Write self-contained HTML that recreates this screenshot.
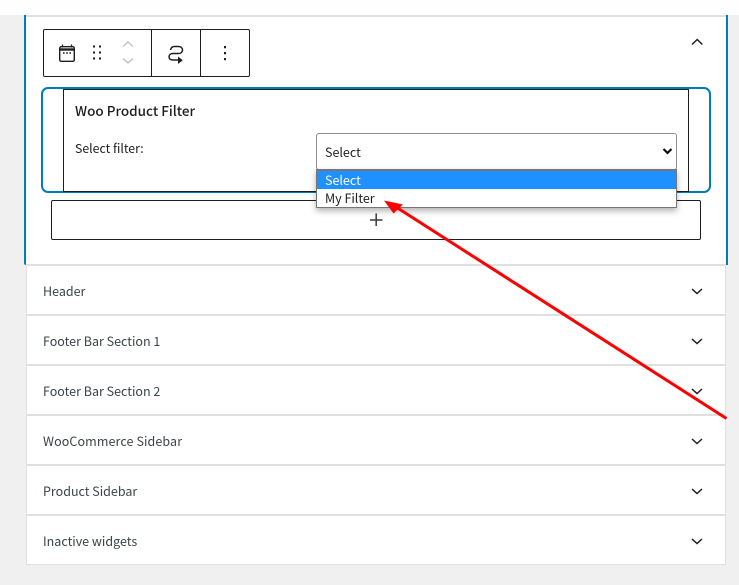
<!DOCTYPE html>
<html><head><meta charset="utf-8"><style>
html,body{margin:0;padding:0;width:739px;height:585px;overflow:hidden;background:#f0f0f0;font-family:"Noto Sans CJK SC","Liberation Sans",sans-serif;-webkit-font-smoothing:auto}
div{position:absolute;box-sizing:border-box}
.t{white-space:nowrap;line-height:18px}
.row{left:26px;width:700px;height:50px;background:#fff;border-bottom:2px solid #e0e0e0;border-right:1px solid #e0e0e0;border-left:1px solid #e0e0e0}
.lab{left:43px;font-size:12.5px;color:#3c434a}
svg{position:absolute;overflow:visible}
</style></head><body>
<div style="left:0;top:0;width:739px;height:15px;background:#fefefe"></div>
<div style="left:24px;top:15px;width:703px;height:250px;background:#fff;border-top:2px solid #e0e0e0"></div>
<div style="left:24px;top:15px;width:2px;height:250px;background:#007cba;border-radius:0 0 0 3px"></div>
<div style="left:726px;top:15px;width:2px;height:250px;background:#007cba"></div>
<div style="left:26px;top:264px;width:700px;height:2px;background:#e0e0e0"></div>
<div class="row" style="top:266px"></div>
<div class="row" style="top:316px"></div>
<div class="row" style="top:366px"></div>
<div class="row" style="top:416px"></div>
<div class="row" style="top:466px"></div>
<div class="row" style="top:516px;height:49px;border-bottom:1px solid #e0e0e0"></div>
<div class="t lab" style="top:282px">Header</div>
<div class="t lab" style="top:332px">Footer Bar Section 1</div>
<div class="t lab" style="top:382px">Footer Bar Section 2</div>
<div class="t lab" style="top:432px;letter-spacing:.1px">WooCommerce Sidebar</div>
<div class="t lab" style="top:482px">Product Sidebar</div>
<div class="t lab" style="top:532px">Inactive widgets</div>
<!-- toolbar -->
<div style="left:43px;top:29px;width:207px;height:48px;border:1px solid #1e1e1e;border-radius:2px;background:#fff"></div>
<div style="left:151px;top:29px;width:1px;height:48px;background:#1e1e1e"></div>
<div style="left:200px;top:29px;width:1px;height:48px;background:#1e1e1e"></div>
<svg style="left:0;top:0" width="739" height="585" fill="none">
<rect x="59.7" y="46.7" width="14.6" height="14.6" rx="1.5" stroke="#1e1e1e" stroke-width="1.4"/>
<path d="M60 49.5h14" stroke="#1e1e1e" stroke-width="2.4"/>
<path d="M62.5 44.5v3M71.5 44.5v3" stroke="#1e1e1e" stroke-width="1.3"/>
<path d="M63 53h1.6M66.2 53h1.6M69.4 53h1.6" stroke="#1e1e1e" stroke-width="1.6"/>
<path d="M93 46.500h2M99 46.500h2M93 52.500h2M99 52.500h2M93 58.500h2M99 58.500h2" stroke="#1e1e1e" stroke-width="2"/>
<path d="M123 46.500l5-4.500 5 4.500M123 58.500l5 4.500 5-4.500" stroke="#c4c4c4" stroke-width="1.500"/>
<path d="M170.500 50c.5-2.500 2-3.500 4-3.500h4c2.500 0 4 1.500 4 3.500s-1.500 3.500-4 3.500h-5.500c-2.500 0-4 1.500-4 3.300s1.500 3.200 4 3.200h8" stroke="#1e1e1e" stroke-width="1.500"/>
<path d="M178.500 57.500l3.500 2.800-3.500 2.700z" fill="#1e1e1e" stroke="#1e1e1e"/>
<path d="M225 46v2.200M225 52v2.200M225 58v2.200" stroke="#1e1e1e" stroke-width="2"/>
<path d="M692 44.500l5.200-5 5.200 5" stroke="#1e1e1e" stroke-width="1.500"/>
</svg>
<!-- block -->
<div style="left:41px;top:87px;width:670px;height:106px;border:2px solid #007cba;border-radius:7px"></div>
<div style="left:63px;top:89px;width:626px;height:103px;border:1px solid #1e1e1e;background:#fff"></div>
<div class="t" style="left:75px;top:101px;font-size:13.5px;font-weight:500;color:#1e1e1e">Woo Product Filter</div>
<div class="t" style="left:75px;top:139px;font-size:12.300px;color:#1e1e1e">Select filter:</div>
<div style="left:316px;top:133px;width:361px;height:37px;border:1px solid #8c8f94;border-radius:3px;background:#fff"></div>
<div class="t" style="left:325px;top:143px;font-size:12.500px;color:#1e1e1e">Select</div>
<svg style="left:0;top:0" width="739" height="585" fill="none"><path d="M663.500 149l4 4 4-4" stroke="#111" stroke-width="2.200"/></svg>
<!-- appender -->
<div style="left:51px;top:200px;width:650px;height:40px;border:1px solid #1e1e1e;border-radius:2px;background:#fff"></div>
<svg style="left:0;top:0" width="739" height="585" fill="none"><path d="M370 220h12.500M376.200 213.500v12.500" stroke="#3a3a3a" stroke-width="1.500"/></svg>
<!-- dropdown -->
<div style="left:316px;top:169px;width:361px;height:39px;border:1px solid #767676;border-top-width:2px;background:#fff;box-shadow:0 3px 6px rgba(0,0,0,.3)"></div>
<div style="left:317px;top:171px;width:359px;height:18px;background:#1e90ff"></div>
<div class="t" style="left:325px;top:171px;font-size:12.500px;color:#fff">Select</div>
<div class="t" style="left:325px;top:189px;font-size:12.500px;color:#1e1e1e">My Filter</div>
<!-- chevrons -->
<svg style="left:0;top:0" width="739" height="585" fill="none" stroke="#1e1e1e" stroke-width="1.500">
<path d="M692 289l5 4.500 5-4.500M692 339l5 4.500 5-4.500M692 389l5 4.500 5-4.500M692 439l5 4.500 5-4.500M692 489l5 4.500 5-4.500M692 539l5 4.500 5-4.500"/>
<path d="M726.500 418.500L396 207" stroke="#fe0000" stroke-width="3"/>
<path d="M384 200.500L403 204.500L393.500 213.500z" fill="#fe0000" stroke="none"/>
</svg>
</body></html>
